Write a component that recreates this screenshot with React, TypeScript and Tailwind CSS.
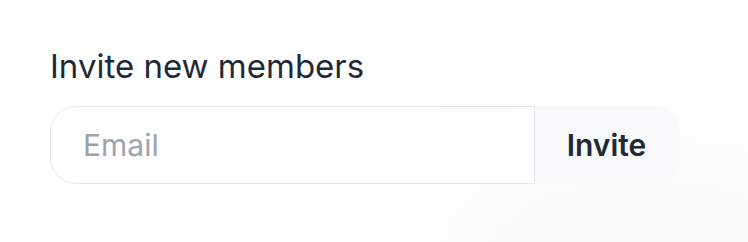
export default function App() {
  return (
    <div className="relative w-[748px] h-[242px] overflow-hidden bg-white font-['Inter',sans-serif]">
      <div className="pointer-events-none absolute -right-32 -bottom-48 w-[460px] h-[300px] rounded-full bg-gray-100/50 blur-3xl" />
      <div className="relative pl-[50px] pt-[44px]">
        <h2 className="text-[33px] leading-[44px] font-normal text-[#1f2937]">Invite new members</h2>
        <div className="mt-[18px] flex h-[78px] w-[630px]">
          <input
            type="email"
            placeholder="Email"
            className="w-[485px] rounded-l-[26px] border border-[#e5e7eb] bg-white pl-[32px] text-[30px] text-[#1f2937] placeholder:text-[#9ca3af] outline-none"
          />
          <button className="flex-1 rounded-r-[26px] bg-[#f8f9fb] pr-[2px] text-[30px] font-semibold text-[#1f2937]">
            Invite
          </button>
        </div>
      </div>
    </div>
  );
}
